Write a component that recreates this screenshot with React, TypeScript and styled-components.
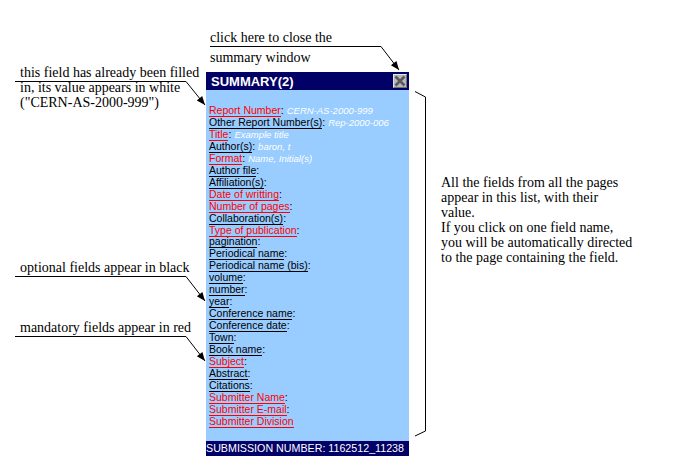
import React from 'react';
import styled, {createGlobalStyle} from 'styled-components';

const GlobalStyle = createGlobalStyle`
  html, body {
    margin: 0;
    padding: 0;
    background: #fff;
  }
`

type Field = { name: string; required?: boolean; value?: string; noColon?: boolean }

const fields: Field[] = [
    {name: 'Report Number', required: true, value: 'CERN-AS-2000-999'},
    {name: 'Other Report Number(s)', value: 'Rep-2000-006'},
    {name: 'Title', required: true, value: 'Example title'},
    {name: 'Author(s)', value: 'baron, t'},
    {name: 'Format', required: true, value: 'Name, Initial(s)'},
    {name: 'Author file'},
    {name: 'Affiliation(s)'},
    {name: 'Date of writting', required: true},
    {name: 'Number of pages', required: true},
    {name: 'Collaboration(s)'},
    {name: 'Type of publication', required: true},
    {name: 'pagination'},
    {name: 'Periodical name'},
    {name: 'Periodical name (bis)'},
    {name: 'volume'},
    {name: 'number'},
    {name: 'year'},
    {name: 'Conference name'},
    {name: 'Conference date'},
    {name: 'Town'},
    {name: 'Book name'},
    {name: 'Subject', required: true},
    {name: 'Abstract'},
    {name: 'Citations'},
    {name: 'Submitter Name', required: true},
    {name: 'Submitter E-mail', required: true},
    {name: 'Submitter Division', required: true, noColon: true},
]

const App = () => {
    return (
        <Page>
            <GlobalStyle/>
            <Summary>
                <TitleBar>
                    SUMMARY(2)
                    <CloseButton>
                        <svg width="14" height="14" viewBox="0 0 14 14">
                            <path d="M2.5 2.5 L11.5 11.5 M11.5 2.5 L2.5 11.5" stroke="#5a5a5a" strokeWidth="2.6" fill="none"/>
                        </svg>
                    </CloseButton>
                </TitleBar>
                <FieldList>
                    {fields.map(field => (
                        <FieldRow key={field.name}>
                            <FieldName $required={field.required}>{field.name}</FieldName>
                            {!field.noColon && ':'}
                            {field.value && <FieldValue>{field.value}</FieldValue>}
                        </FieldRow>
                    ))}
                </FieldList>
                <Footer>SUBMISSION NUMBER: 1162512_11238</Footer>
            </Summary>

            <Leaders width="680" height="471" viewBox="0 0 680 471">
                <defs>
                    <marker id="head" viewBox="0 0 10 8" refX="10" refY="4" markerWidth="11" markerHeight="7"
                            orient="auto" markerUnits="userSpaceOnUse">
                        <path d="M0 0 L10 4 L0 8 Z" fill="#000"/>
                    </marker>
                </defs>
                <LeaderLine points="210,46.5 381,46.5 399,70" markerEnd="url(#head)"/>
                <LeaderLine points="15,81.5 186,81.5 205,105" markerEnd="url(#head)"/>
                <LeaderLine points="15,276.5 186,276.5 205,301" markerEnd="url(#head)"/>
                <LeaderLine points="15,336.5 186,336.5 205,361" markerEnd="url(#head)"/>
                <LeaderLine points="415,91.5 425.5,97 425.5,431 415,436"/>
            </Leaders>

            <Note $left={210} $top={28} $lineHeight={20}>
                click here to close the<br/>summary window
            </Note>
            <Note $left={20} $top={65}>
                this field has already been filled<br/>in, its value appears in white<br/>("CERN-AS-2000-999")
            </Note>
            <Note $left={20} $top={260}>optional fields appear in black</Note>
            <Note $left={20} $top={320}>mandatory fields appear in red</Note>
            <Note $left={441} $top={175}>
                All the fields from all the pages<br/>appear in this list, with their<br/>value.<br/>
                If you click on one field name,<br/>you will be automatically directed<br/>to the page containing the field.
            </Note>
        </Page>
    );
};

export default App;


const Page = styled.div`
  position: relative;
  width: 680px;
  height: 471px;
  padding: 72px 0 0 206px;
  box-sizing: border-box;
  overflow: hidden;
  background: #fff;
`

const Summary = styled.div`
  width: 203px;
  height: 384px;
  display: flex;
  flex-direction: column;
  background-color: #99ccff;
  font-family: "Liberation Sans", Arial, sans-serif;
`

const TitleBar = styled.div`
  height: 18px;
  padding: 0 2px 0 5px;
  display: flex;
  align-items: center;
  justify-content: space-between;
  background-color: #000066;
  color: #fff;
  font-size: 13px;
  font-weight: bold;
`

const CloseButton = styled.div`
  width: 14px;
  height: 14px;
  display: flex;
  background-color: #b8b8b8;
  border: 1px solid;
  border-color: #e4e4e4 #707070 #707070 #e4e4e4;
  box-sizing: border-box;

  svg {
    margin: -1px;
    flex: none;
  }
`

const FieldList = styled.div`
  flex: 1;
  padding: 14px 0 0 3px;
`

const FieldRow = styled.div`
  height: 11.96px;
  line-height: 12px;
  font-size: 10.5px;
  color: #000;
  white-space: nowrap;
`

const FieldName = styled.span<{ $required?: boolean }>`
  display: inline-block;
  height: 11px;
  line-height: 11px;
  color: ${props => props.$required ? '#ff0000' : '#000'};
  border-bottom: 1px solid currentColor;
`

const FieldValue = styled.span`
  margin-left: 3px;
  color: #fff;
  font-size: 9.5px;
  font-style: italic;
`

const Footer = styled.div`
  height: 15px;
  line-height: 15px;
  background-color: #000066;
  color: #fff;
  font-size: 10.7px;
  white-space: nowrap;
`

const Leaders = styled.svg`
  position: absolute;
  top: 0;
  left: 0;
  pointer-events: none;
`

const LeaderLine = styled.polyline`
  fill: none;
  stroke: #000;
  stroke-width: 1;
`

const Note = styled.div<{ $left: number; $top: number; $lineHeight?: number }>`
  position: absolute;
  left: ${props => props.$left}px;
  top: ${props => props.$top}px;
  font-family: "Liberation Serif", "Times New Roman", serif;
  font-size: 14px;
  line-height: ${props => props.$lineHeight ?? 15}px;
  color: #000;
  white-space: nowrap;
`
